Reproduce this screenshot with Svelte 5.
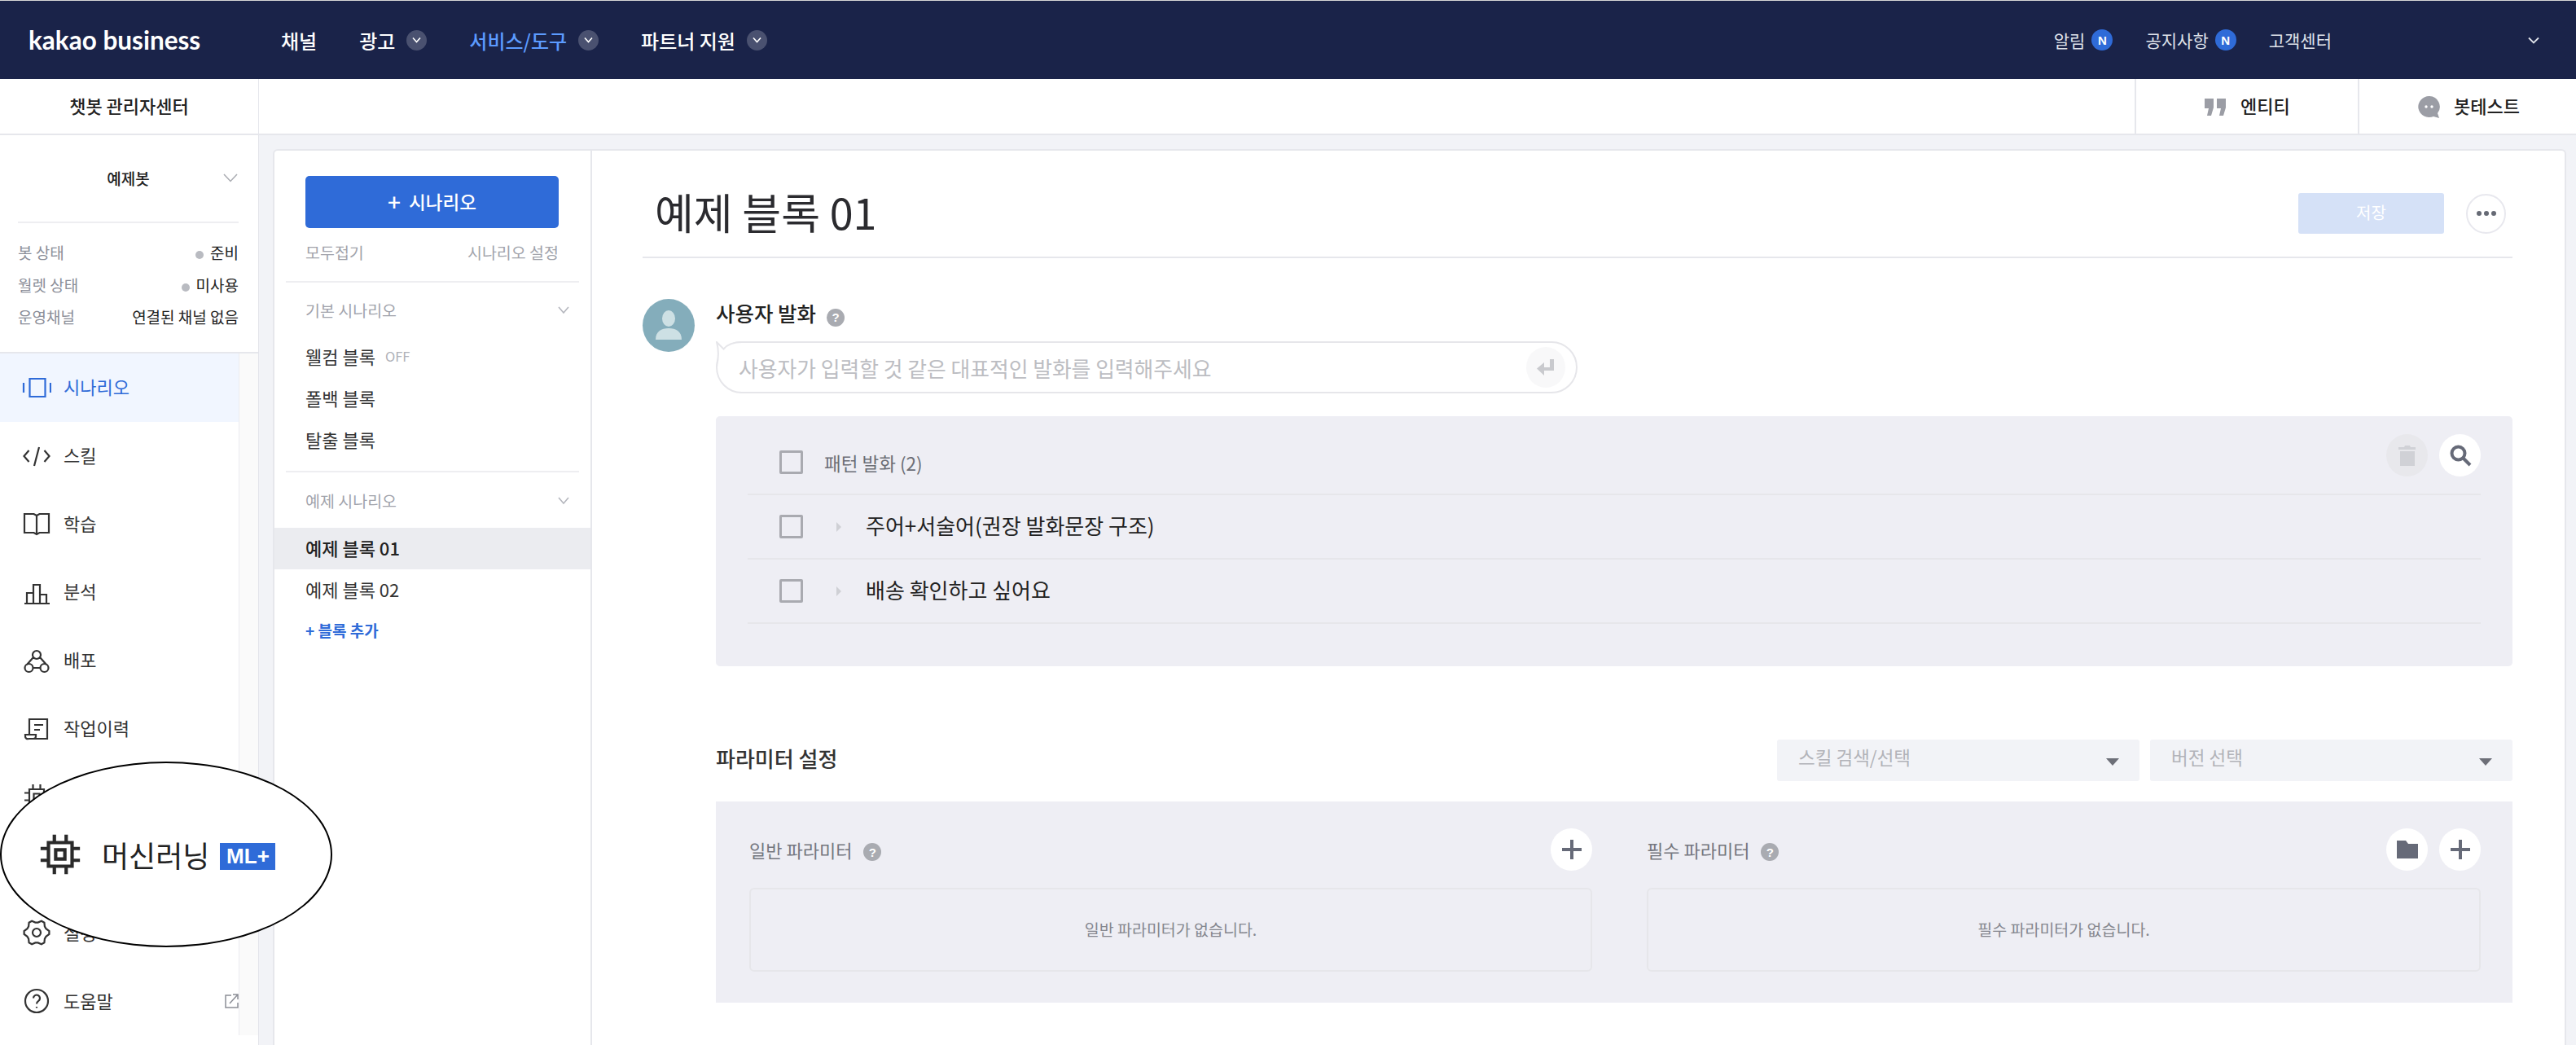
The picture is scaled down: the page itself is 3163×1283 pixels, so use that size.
<script>
  const gnb = [
    { label: "채널", arrow: false },
    { label: "광고", arrow: true },
    { label: "서비스/도구", arrow: true, on: true },
    { label: "파트너 지원", arrow: true }
  ];

  const status = [
    { key: "봇 상태", value: "준비", dot: true },
    { key: "월렛 상태", value: "미사용", dot: true },
    { key: "운영채널", value: "연결된 채널 없음", dot: false }
  ];

  // 6 tooth gear outline for the settings row
  const gear = Array.from({ length: 24 }, (_, i) => {
    const a = ((i * 15 - 7.5) * Math.PI) / 180;
    const r = i % 4 < 2 ? 15.5 : 12.5;
    return `${(18 + r * Math.cos(a)).toFixed(1)} ${(18 + r * Math.sin(a)).toFixed(1)}`;
  }).join("L");

  const chip = "M9 9h18v18H9zM14.5 14.5h7v7h-7zM13.5 3v6M22.5 3v6M13.5 27v6M22.5 27v6M3 13.5h6M3 22.5h6M27 13.5h6M27 22.5h6";

  const menu = [
    { label: "시나리오", on: true, d: "M9.5 7h19v22h-19zM2 12v12M35 12v12" },
    { label: "스킬", d: "M8.5 11l-6 7 6 7M27.5 11l6 7-6 7M21 7l-6 23" },
    { label: "학습", d: "M3 6h11.5l3.5 2 3.5-2H33v23H21.5L18 31l-3.5-2H3zM18 8v23" },
    { label: "분석", d: "M3 32h31M6 32V19h8v13M14 32V9h8v23M22 32V21h8v11" },
    { label: "배포", d: "M13 11a5 5 0 1 0 10 0a5 5 0 1 0-10 0M3.500 27a5 5 0 1 0 10 0a5 5 0 1 0-10 0M22.500 27a5 5 0 1 0 10 0a5 5 0 1 0-10 0M14 14L6 23M22 14l8 9M13 27h10" },
    { label: "작업이력", d: "M9 26V7h22v24H8M8 31a3 3 0 0 1-4-3v-2h13v2a3 3 0 0 1-3 3M15 14h11M15 20h7" },
    { label: "머신러닝", d: chip },
    { label: "", d: "" },
    { label: "설정", d: `M${gear}ZM13 18a5 5 0 1 0 10 0a5 5 0 1 0-10 0` },
    { label: "도움말", link: true, d: "M4 18a14 14 0 1 0 28 0a14 14 0 1 0-28 0M14 14.500a4 4 0 1 1 6.300 3.300c-1.600 1.100-2.300 1.900-2.300 3.700M18 25v1.500" }
  ];

  const basic = ["폴백 블록", "탈출 블록"];
  const samples = ["주어+서술어(권장 발화문장 구조)", "배송 확인하고 싶어요"];
</script>

<style>
  :global(body) {
    margin: 0;
    background: #f2f3f7;
  }

  .page {
    position: relative;
    height: 1283px;
    overflow: hidden;
    display: flex;
    flex-direction: column;
    font-family: "Noto Sans CJK KR", "Noto Sans", sans-serif;
    color: #222;
  }

  /* top nav */
  .gnb {
    height: 96px;
    flex: none;
    display: flex;
    align-items: center;
    border-top: 1px solid #d6d6d6;
    background: #1a2349;
    color: #fff;
  }
  .logo {
    font-family: Lato, sans-serif;
    font-weight: 700;
    font-size: 31.5px;
    margin-left: 35px;
    width: 310px;
  }
  .gnb-item {
    display: flex;
    align-items: center;
    gap: 14px;
    margin-right: 52px;
    font-size: 24px;
    font-weight: 500;
  }
  .gnb-item.on {
    color: #5c9bff;
  }
  .arrow {
    width: 25px;
    height: 25px;
    border-radius: 50%;
    background: #4a5170;
    display: flex;
    align-items: center;
    justify-content: center;
  }
  .gnb-right {
    margin-left: auto;
    display: flex;
    align-items: center;
    font-size: 21px;
    color: #dfe2ea;
  }
  .gnb-right span.txt {
    margin-left: 40px;
  }
  .gnb-right span.txt:first-child {
    margin-left: 1px;
  }
  .n {
    width: 26px;
    height: 26px;
    margin-left: 8px;
    border-radius: 50%;
    background: #2f6bd8;
    color: #fff;
    font-size: 15px;
    font-weight: 700;
    font-family: "Liberation Sans", sans-serif;
    display: flex;
    align-items: center;
    justify-content: center;
  }
  .me {
    margin: 0 45px 0 241px;
    display: flex;
  }

  /* sub bar */
  .sub {
    height: 67px;
    flex: none;
    display: flex;
    background: #fff;
    border-bottom: 2px solid #e6e7ec;
    font-size: 22px;
    font-weight: 500;
  }
  .sub-title {
    width: 318px;
    box-sizing: border-box;
    padding-bottom: 4px;
    display: flex;
    align-items: center;
    justify-content: center;
    border-right: 1px solid #e6e7ec;
  }
  .sub-tabs {
    margin-left: auto;
    display: flex;
  }
  .tab {
    display: flex;
    align-items: center;
    gap: 18px;
    height: 67px;
    box-sizing: border-box;
    border-left: 2px solid #e6e7ec;
    padding: 0 0 4px 84px;
    width: 274px;
  }
  .tab svg {
    margin-top: 6px;
  }
  .tab + .tab {
    width: 268px;
    padding-left: 72px;
    gap: 16px;
  }

  .body {
    flex: 1;
    min-height: 0;
    display: flex;
  }

  /* left sidebar */
  .side {
    width: 318px;
    flex: none;
    background: #fff;
    border-right: 1px solid #e3e4ea;
    box-sizing: border-box;
  }
  .bot {
    height: 266px;
    border-bottom: 2px solid #e6e7ec;
    box-sizing: content-box;
    padding: 0 24px 0 22px;
  }
  .bot-select {
    height: 108px;
    box-sizing: border-box;
    padding-bottom: 2px;
    display: grid;
    grid-template-columns: 1fr auto 1fr;
    align-items: center;
    border-bottom: 2px solid #eeeef1;
    font-size: 19px;
    font-weight: 500;
  }
  .bot-select svg {
    justify-self: end;
    margin-right: 1px;
  }
  .status {
    padding-top: 16px;
  }
  .status div {
    height: 39.5px;
    display: flex;
    align-items: center;
    justify-content: space-between;
    font-size: 19px;
    color: #8b8e98;
  }
  .status b {
    font-weight: 400;
    color: #222;
  }
  .dot {
    display: inline-block;
    width: 10px;
    height: 10px;
    margin-right: 8px;
    border-radius: 50%;
    background: #b9bbc1;
  }
  .menu-wrap {
    display: flex;
  }
  .menu {
    width: 293px;
    flex: none;
    border-right: 1px solid #ececf0;
  }
  .bar {
    flex: 1;
    background: #fafafa;
  }
  .item {
    height: 83.7px;
    display: flex;
    align-items: center;
    gap: 15px;
    padding-left: 27px;
    font-size: 22px;
    color: #333;
  }
  .item span {
    padding-bottom: 3px;
  }
  .item.on {
    background: #f1f6ff;
    color: #2f6bd8;
  }
  .item svg.out {
    margin-left: auto;
    margin-right: 0;
  }

  /* card */
  .card {
    flex: 1;
    margin: 17px 14px 0 17px;
    display: flex;
    background: #fff;
    border: 2px solid #e6e7ec;
    border-bottom: 0;
    border-radius: 6px 6px 0 0;
  }

  /* scenarios column */
  .scen {
    width: 388px;
    flex: none;
    border-right: 2px solid #e6e7ec;
    box-sizing: content-box;
  }
  .add {
    margin: 31px 39px 0 38px;
    height: 64px;
    padding-bottom: 3px;
    box-sizing: border-box;
    display: flex;
    align-items: center;
    justify-content: center;
    gap: 10px;
    border-radius: 5px;
    background: #2f6bd8;
    color: #fff;
    font-size: 22.5px;
    font-weight: 500;
  }
  .add span {
    font-size: 28px;
    line-height: 1;
  }
  .links {
    height: 62px;
    padding-bottom: 3px;
    box-sizing: border-box;
    margin: 0 39px 0 38px;
    display: flex;
    align-items: center;
    justify-content: space-between;
    font-size: 19.5px;
    color: #a1a3ab;
  }
  .rule {
    height: 2px;
    margin: 3px 14px 0;
    background: #eeeef1;
  }
  .group {
    height: 66px;
    display: flex;
    align-items: center;
    justify-content: space-between;
    padding: 0 26px 0 38px;
    font-size: 19.5px;
    color: #a1a3ab;
  }
  .group.second {
    height: 68px;
  }
  .block {
    height: 51px;
    box-sizing: border-box;
    padding: 0 0 4px 38px;
    display: flex;
    align-items: center;
    gap: 12px;
    font-size: 22px;
    color: #333;
  }
  .block.sel {
    background: #ebecf0;
    font-weight: 500;
    color: #222;
  }
  .off {
    font-size: 16.500px;
    color: #aeb0b7;
  }
  .rule.mid {
    margin-top: 12px;
  }
  .more {
    color: #2f6bd8;
    font-size: 19px;
    font-weight: 700;
  }

  /* main */
  .main {
    flex: 1;
    min-width: 0;
    padding: 0 64px 0 62px;
  }
  .head {
    height: 132px;
    padding: 24px 8px 0 15px;
    box-sizing: border-box;
    display: flex;
    align-items: center;
    border-bottom: 2px solid #e6e7ec;
  }
  h1 {
    margin: 0 0 5px;
    font-size: 52px;
    font-weight: 400;
    color: #2b2b2f;
  }
  .save {
    margin-left: auto;
    width: 179px;
    height: 50px;
    padding-bottom: 3px;
    box-sizing: border-box;
    border-radius: 3px;
    background: #d5e1f7;
    color: #fff;
    font-size: 20px;
    display: flex;
    align-items: center;
    justify-content: center;
  }
  .dots {
    width: 49px;
    height: 49px;
    margin-left: 27px;
    box-sizing: border-box;
    border: 2px solid #e8e8ee;
    border-radius: 50%;
    display: flex;
    align-items: center;
    justify-content: center;
    gap: 3px;
  }
  .dots i {
    width: 6px;
    height: 6px;
    border-radius: 50%;
    background: #666a75;
  }
  .utter {
    margin-top: 50px;
    display: flex;
    gap: 26px;
  }
  .avatar {
    width: 64px;
    height: 65px;
    flex: none;
    border-radius: 50%;
    overflow: hidden;
    background: #84adbb;
  }
  .utter-body {
    flex: 1;
    min-width: 0;
  }
  .label {
    height: 36px;
    display: flex;
    align-items: center;
    gap: 13px;
    font-size: 25.500px;
    font-weight: 500;
  }
  .label em {
    font-style: normal;
    margin-bottom: 3px;
  }
  .q {
    width: 22px;
    height: 22px;
    margin-top: 9px;
    border-radius: 50%;
    background: #a9abb1;
    color: #fff;
    font-size: 15px;
    font-weight: 700;
    font-family: "Liberation Sans", sans-serif;
    display: flex;
    align-items: center;
    justify-content: center;
  }
  .input {
    position: relative;
    width: 1058px;
    height: 64px;
    margin-top: 16px;
    box-sizing: border-box;
    padding: 0 13px 0 26px;
    display: flex;
    align-items: center;
    justify-content: space-between;
    border: 2px solid #e6e6ea;
    border-radius: 32px;
    font-size: 25.800px;
    color: #bcbdc2;
  }
  .tail {
    position: absolute;
    left: -2px;
    top: -2px;
  }
  .enter {
    width: 48px;
    height: 50px;
    border-radius: 50%;
    background: #f8f8f9;
    display: flex;
    align-items: center;
    justify-content: center;
  }
  .panel {
    margin-top: 28px;
    padding: 0 39px 52px;
    border-radius: 5px;
    background: #eeeef4;
  }
  .row {
    height: 77px;
    display: flex;
    align-items: center;
    padding-left: 39px;
    border-bottom: 2px solid #e6e6ea;
    font-size: 26px;
  }
  .row.top {
    height: 95px;
    font-size: 22.500px;
    color: #6c6e76;
  }
  .row.top .left {
    display: flex;
    align-items: center;
    margin-top: 18px;
  }
  .row .txt {
    padding-bottom: 4px;
  }
  .check {
    width: 29px;
    height: 29px;
    flex: none;
    box-sizing: border-box;
    border: 3px solid #a9aab0;
    border-radius: 2px;
    margin-right: 26px;
  }
  .tri {
    width: 0;
    height: 0;
    margin: 0 30px 0 15px;
    border-left: 6px solid #cfd0d5;
    border-top: 6px solid transparent;
    border-bottom: 6px solid transparent;
  }
  .tools {
    margin-left: auto;
    display: flex;
    gap: 14px;
  }
  .round {
    width: 51px;
    height: 52px;
    border-radius: 50%;
    background: #fff;
    display: flex;
    align-items: center;
    justify-content: center;
  }
  .round.idle {
    background: #e8e8ec;
  }

  /* parameters */
  .param-head {
    margin: 90px 0 0 0;
    height: 51px;
    display: flex;
    align-items: center;
    gap: 13px;
  }
  .param-head h2 {
    margin: 0 auto 7px 0;
    font-size: 26px;
    font-weight: 500;
    color: #333;
  }
  .select {
    width: 445px;
    height: 51px;
    box-sizing: border-box;
    padding: 0 25px 0 26px;
    border-radius: 3px;
    background: #f2f3f7;
    display: flex;
    align-items: center;
    justify-content: space-between;
    font-size: 22.500px;
    color: #b2b3b9;
  }
  .select span {
    padding-bottom: 9px;
  }
  .select i {
    border-top: 9px solid #6d6f78;
    border-left: 8px solid transparent;
    border-right: 8px solid transparent;
    margin-top: 4px;
  }
  .panel.params {
    margin-top: 25px;
    padding: 32px 39px 38px 41px;
    border-radius: 0;
    display: grid;
    grid-template-columns: 1035px 1024px;
    gap: 67px;
  }
  .col-head {
    height: 53px;
    display: flex;
    align-items: center;
    gap: 14px;
    font-size: 22px;
    color: #74767e;
  }
  .col-head .q {
    margin-top: 7px;
  }
  .col-head .tools {
    margin-left: auto;
  }
  .none {
    height: 103px;
    margin-top: 21px;
    box-sizing: border-box;
    padding-bottom: 3px;
    border: 2px solid #e6e6ea;
    border-radius: 6px;
    display: flex;
    align-items: center;
    justify-content: center;
    font-size: 19.500px;
    color: #85878f;
  }

  /* hand drawn callout over the sidebar */
  .callout {
    position: absolute;
    left: 0;
    top: 935px;
    width: 408px;
    height: 228px;
    box-sizing: border-box;
    padding-left: 43px;
    border: 2px solid #000;
    border-radius: 50%;
    background: #fff;
    display: flex;
    align-items: center;
    font-size: 36px;
    color: #222;
  }
  .callout span {
    margin-left: 22px;
  }
  .callout b {
    margin-left: 13px;
    width: 68px;
    height: 33px;
    margin-top: 4px;
    background: #2f6bd8;
    color: #fff;
    font-family: "Liberation Sans", sans-serif;
    font-size: 26px;
    font-weight: 700;
    display: flex;
    align-items: center;
    justify-content: center;
  }
</style>

<div class="page">
  <header class="gnb">
    <div class="logo">kakao business</div>
    {#each gnb as g}
      <div class="gnb-item" class:on={g.on}>
        {g.label}
        {#if g.arrow}
          <span class="arrow">
            <svg width="11" height="8" viewBox="0 0 11 8" fill="none" stroke="#fff" stroke-width="1.600"><path d="M1 1.500l4.500 5 4.500-5" /></svg>
          </span>
        {/if}
      </div>
    {/each}
    <div class="gnb-right">
      <span class="txt">알림</span><span class="n">N</span>
      <span class="txt">공지사항</span><span class="n">N</span>
      <span class="txt">고객센터</span>
      <span class="me">
        <svg width="14" height="9" viewBox="0 0 14 9" fill="none" stroke="#dfe2ea" stroke-width="1.800"><path d="M1 1.500l6 6 6-6" /></svg>
      </span>
    </div>
  </header>

  <div class="sub">
    <div class="sub-title">챗봇 관리자센터</div>
    <div class="sub-tabs">
      <div class="tab">
        <svg width="26" height="21" viewBox="0 0 26 21" fill="#9b9da5"><path d="M0 0h11v11l-3 10H3l2-9H0zM15 0h11v11l-3 10h-5l2-9h-5z" /></svg>
        엔티티
      </div>
      <div class="tab">
        <svg width="28" height="27" viewBox="0 0 28 27"><path fill="#9b9da5" d="M14 0a13.500 13 0 1 0 5 25l7 2-2-6A13 13 0 0 0 14 0z" /><circle cx="10" cy="13" r="1.700" fill="#fff" /><circle cx="17" cy="13" r="1.700" fill="#fff" /></svg>
        봇테스트
      </div>
    </div>
  </div>

  <div class="body">
    <aside class="side">
      <div class="bot">
        <div class="bot-select">
          <span></span>
          <span>예제봇</span>
          <svg width="18" height="11" viewBox="0 0 18 11" fill="none" stroke="#a9abb1" stroke-width="1.500"><path d="M1 1l8 8.500L17 1" /></svg>
        </div>
        <div class="status">
          {#each status as s}
            <div>
              {s.key}
              <b>{#if s.dot}<span class="dot"></span>{/if}{s.value}</b>
            </div>
          {/each}
        </div>
      </div>
      <div class="menu-wrap">
        <nav class="menu">
          {#each menu as m}
            <div class="item" class:on={m.on}>
              <svg width="36" height="36" viewBox="0 0 36 36" fill="none" stroke={m.on ? "#2f6bd8" : "#333"} stroke-width="2.200"><path d={m.d} /></svg>
              <span>{m.label}</span>
              {#if m.link}
                <svg class="out" width="17" height="18" viewBox="0 0 17 18" fill="none" stroke="#8c8e96" stroke-width="1.500"><path d="M8 2H1v15h15v-6M6 12L16 1M10 1h6v6" /></svg>
              {/if}
            </div>
          {/each}
        </nav>
        <div class="bar"></div>
      </div>
    </aside>

    <div class="card">
      <section class="scen">
        <div class="add"><span>+</span> 시나리오</div>
        <div class="links"><span>모두접기</span><span>시나리오 설정</span></div>
        <div class="rule"></div>
        <div class="group">
          기본 시나리오
          <svg width="14" height="9" viewBox="0 0 14 9" fill="none" stroke="#b4b6bd" stroke-width="1.600"><path d="M1 1l6 7 6-7" /></svg>
        </div>
        <div class="block">웰컴 블록 <span class="off">OFF</span></div>
        {#each basic as b}
          <div class="block">{b}</div>
        {/each}
        <div class="rule mid"></div>
        <div class="group second">
          예제 시나리오
          <svg width="14" height="9" viewBox="0 0 14 9" fill="none" stroke="#b4b6bd" stroke-width="1.600"><path d="M1 1l6 7 6-7" /></svg>
        </div>
        <div class="block sel">예제 블록 01</div>
        <div class="block">예제 블록 02</div>
        <div class="block more">+ 블록 추가</div>
      </section>

      <main class="main">
        <div class="head">
          <h1>예제 블록 01</h1>
          <div class="save">저장</div>
          <div class="dots"><i></i><i></i><i></i></div>
        </div>

        <div class="utter">
          <div class="avatar">
            <svg width="64" height="65" viewBox="0 0 64 65"><ellipse cx="32" cy="24" rx="8" ry="10" fill="#cde0e4" /><path fill="#cde0e4" d="M16 50c0-10 7-14 16-14s16 4 16 14z" /></svg>
          </div>
          <div class="utter-body">
            <div class="label"><em>사용자 발화</em> <span class="q">?</span></div>
            <div class="input">
              <svg class="tail" width="32" height="32" viewBox="0 0 32 32" fill="#fff" stroke="#e6e6ea" stroke-width="2"><path d="M32 1C22 1 14 4 9.500 9.500L1 1C3.500 10 3.500 20 1 31" /></svg>
              사용자가 입력할 것 같은 대표적인 발화를 입력해주세요
              <span class="enter">
                <svg width="24" height="24" viewBox="0 0 24 24" fill="#c9cace"><path d="M17 2h5v14H10v6L1 13.500 10 6v6h7z" /></svg>
              </span>
            </div>

            <div class="panel">
              <div class="row top">
                <div class="left"><span class="check"></span>패턴 발화 (2)</div>
                <div class="tools">
                  <span class="round idle">
                    <svg width="24" height="28" viewBox="0 0 24 28" fill="#d0d1d6"><path d="M2 7h20v-3h-6l-1-2H9L8 4H1v3zM3 9h18v18H3z" /></svg>
                  </span>
                  <span class="round">
                    <svg width="28" height="28" viewBox="0 0 28 28" fill="none" stroke="#666a78" stroke-width="4"><circle cx="11.500" cy="11.500" r="8" /><path d="M17.500 17.500L26 26" /></svg>
                  </span>
                </div>
              </div>
              {#each samples as s}
                <div class="row"><span class="check"></span><span class="tri"></span><span class="txt">{s}</span></div>
              {/each}
            </div>

            <div class="param-head">
              <h2>파라미터 설정</h2>
              <div class="select"><span>스킬 검색/선택</span> <i></i></div>
              <div class="select"><span>버전 선택</span> <i></i></div>
            </div>

            <div class="panel params">
              <div>
                <div class="col-head">
                  일반 파라미터 <span class="q">?</span>
                  <div class="tools">
                    <span class="round">
                      <svg width="26" height="26" viewBox="0 0 26 26" stroke="#666a78" stroke-width="4"><path d="M13 1v24M1 13h24" /></svg>
                    </span>
                  </div>
                </div>
                <div class="none">일반 파라미터가 없습니다.</div>
              </div>
              <div>
                <div class="col-head">
                  필수 파라미터 <span class="q">?</span>
                  <div class="tools">
                    <span class="round">
                      <svg width="26" height="22" viewBox="0 0 26 22" fill="#666a78"><path d="M0 0h11l3 4h12v18H0z" /></svg>
                    </span>
                    <span class="round">
                      <svg width="26" height="26" viewBox="0 0 26 26" stroke="#666a78" stroke-width="4"><path d="M13 1v24M1 13h24" /></svg>
                    </span>
                  </div>
                </div>
                <div class="none">필수 파라미터가 없습니다.</div>
              </div>
            </div>
          </div>
        </div>
      </main>
    </div>
  </div>

  <div class="callout">
    <svg width="58" height="58" viewBox="0 0 36 36" fill="none" stroke="#2a2a2a" stroke-width="2.600"><path d={chip} /></svg>
    <span>머신러닝</span>
    <b>ML+</b>
  </div>
</div>
